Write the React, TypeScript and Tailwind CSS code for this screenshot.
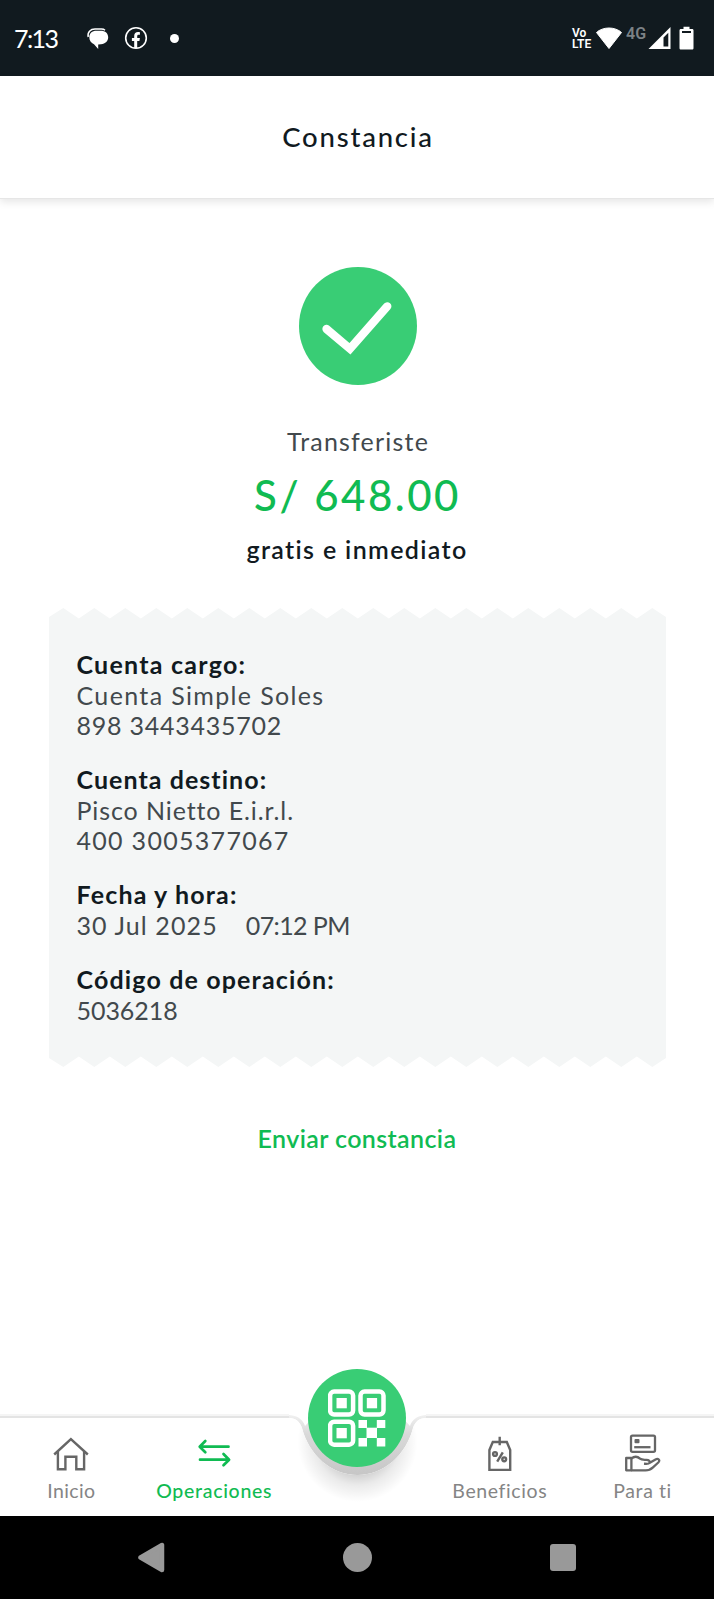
import React from 'react';

type Field = {
    label: string;
    tracking: string;
    lines: { text: string; tracking: string }[][];
};

const fields: Field[] = [
    {
        label: 'Cuenta cargo:',
        tracking: 'tracking-[1.25px]',
        lines: [
            [{ text: 'Cuenta Simple Soles', tracking: 'tracking-[1.35px]' }],
            [{ text: '898 3443435702', tracking: 'tracking-[0.75px]' }],
        ],
    },
    {
        label: 'Cuenta destino:',
        tracking: 'tracking-[1.05px]',
        lines: [
            [{ text: 'Pisco Nietto E.i.r.l.', tracking: 'tracking-[0.9px]' }],
            [{ text: '400 3005377067', tracking: 'tracking-[1.3px]' }],
        ],
    },
    {
        label: 'Fecha y hora:',
        tracking: 'tracking-[1.15px]',
        lines: [
            [
                { text: '30 Jul 2025', tracking: 'tracking-[1.1px]' },
                { text: '07:12 PM', tracking: 'tracking-[-0.6px]' },
            ],
        ],
    },
    {
        label: 'Código de operación:',
        tracking: 'tracking-[1.15px]',
        lines: [[{ text: '5036218', tracking: 'tracking-[-0.05px]' }]],
    },
];

// 19 full teeth plus the clipped ones at both sides
const teeth = Array.from({ length: 20 }, (_, i) => {
    const x = 14.3 + i * 31;
    return i < 19 ? `L${x} 0L${x + 15.5} 10.5` : `L${x} 0`;
}).join('');
const zigzag = `M0 9${teeth}L617 9V11H0Z`;

function StatusBar() {
    return (
        <div className="flex h-[76px] items-center justify-between bg-[#111a1f] text-white">
            <div className="flex items-center pl-[14px]">
                <span className="w-[72px] pt-px text-[25px] tracking-[-1.6px]">7:13</span>
                <svg className="h-6 w-6" viewBox="0 0 24 24" fill="none">
                    <path d="M2.200 11C1.200 6 4.500 3.100 9 3.100H15.500C17 3.100 18.200 3.500 19 4.200" stroke="#fff" strokeWidth="1.500" />
                    <path
                        d="M10.500 4.800H14.500C19.500 4.800 22.200 7.500 22.200 11.300C22.200 15 19.500 17.800 15 18.200L12.200 18.500V23L8 18.200C5 17 3.300 14.500 3.300 11.300C3.300 7.500 6 4.800 10.500 4.800Z"
                        fill="#fff"
                    />
                </svg>
                <svg className="ml-[14px] h-6 w-6" viewBox="0 0 24 24" fill="none">
                    <circle cx="12" cy="12" r="10.300" stroke="#fff" strokeWidth="1.600" />
                    <path
                        d="M10.200 22V15H7.900V12H10.200V10C10.200 7.300 11.700 6 14 6C15 6 15.900 6.200 15.900 6.200V8.700H14.600C13.500 8.700 13.200 9.400 13.200 10.200V12H15.900L15.400 15H13.200V22Z"
                        fill="#fff"
                    />
                </svg>
                <span className="ml-[22px] h-[9px] w-[9px] rounded-full bg-white" />
            </div>
            <div className="flex items-center pr-5">
                <div className="flex w-6 flex-col pt-0.5 font-['Roboto',sans-serif] text-[12px] leading-[11px] font-semibold">
                    <span>Vo</span>
                    <span>LTE</span>
                </div>
                <svg className="h-6 w-[26px]" viewBox="0 0 26 24">
                    <path d="M0.500 6.500C7 0.500 19 0.500 25.500 6.500L13 22.500Z" fill="#fff" stroke="#fff" strokeLinejoin="round" />
                </svg>
                <span className="mb-[9px] w-[26px] pl-1 font-['Roboto',sans-serif] text-[16px] leading-4 font-semibold text-[#7c8286]">
                    4G
                </span>
                <svg className="h-6 w-[23px]" viewBox="0 0 23 24">
                    <path fillRule="evenodd" d="M0.500 23L22.500 1V23ZM15.500 11.500V20.500H20.300V6.700Z" fill="#fff" />
                </svg>
                <svg className="ml-2 h-6 w-[15px]" viewBox="0 0 15 24">
                    <path
                        fillRule="evenodd"
                        d="M4.500 0.800H10.500V3H13C14 3 14.500 3.500 14.500 4.500V22C14.500 23 14 23.500 13 23.500H2C1 23.500 0.500 23 0.500 22V4.500C0.500 3.500 1 3 2 3H4.500ZM3 5V7H12V5Z"
                        fill="#fff"
                    />
                </svg>
            </div>
        </div>
    );
}

function Receipt() {
    return (
        <div className="mt-11 w-[617px]">
            <svg className="block h-[11px] w-full" viewBox="0 0 617 11">
                <path d={zigzag} fill="#f4f6f6" />
            </svg>
            <div className="flex h-[437px] flex-col gap-6 bg-[#f4f6f6] pt-[30px] pl-7 text-[25px] leading-[30px]">
                {fields.map((field) => (
                    <div key={field.label}>
                        <div className={`mb-px font-bold text-[#111a1f] ${field.tracking}`}>{field.label}</div>
                        {field.lines.map((line, i) => (
                            <div key={i} className="flex gap-7 text-[#42494d]">
                                {line.map((part) => (
                                    <span key={part.text} className={part.tracking}>{part.text}</span>
                                ))}
                            </div>
                        ))}
                    </div>
                ))}
            </div>
            <svg className="block h-[11px] w-full rotate-180 -scale-x-100" viewBox="0 0 617 11">
                <path d={zigzag} fill="#f4f6f6" />
            </svg>
        </div>
    );
}

function HomeIcon() {
    return (
        <svg className="h-[38px] w-9" viewBox="0 -2 36 38" fill="none" stroke="#666" strokeWidth="2.400">
            <path d="M1.200 18.500L17.900 3.200L34.800 18.500" />
            <path d="M4.900 15.500V33.200H12.400V20.800H23.300V33.200H31.100V15.500" />
        </svg>
    );
}

function TransferIcon() {
    return (
        <svg className="h-[38px] w-9" viewBox="0 -2 36 38" fill="none" stroke="#10bb52" strokeWidth="2.700" strokeLinecap="round" strokeLinejoin="round">
            <path d="M32.500 10.700H4M9.300 5L3.700 10.700L9.300 16.200" />
            <path d="M4 23.700H32.500M27.500 18L33.100 23.700L27.500 29.300" />
        </svg>
    );
}

function TagIcon() {
    return (
        <svg className="h-[38px] w-9" viewBox="0.500 -2 36 38" fill="none" stroke="#666" strokeWidth="2.400">
            <path d="M11.300 6H25.300L28.700 14V33.900H7.900V14Z" />
            <path d="M18.200 0.700V9.200M21.300 16.300L15.700 25.700" />
            <circle cx="13.500" cy="18" r="1.900" />
            <circle cx="22.700" cy="23.300" r="1.900" />
        </svg>
    );
}

function HandIcon() {
    return (
        <svg className="h-[38px] w-9" viewBox="0.500 0.500 36 38" fill="none" stroke="#666" strokeWidth="2.300" strokeLinejoin="round">
            <rect x="6.500" y="2.100" width="24" height="16.200" rx="1.500" />
            <rect x="10" y="5.400" width="5" height="4.400" rx="1" fill="#666" stroke="none" />
            <path d="M9.700 13.700H26" />
            <path d="M1.700 24.500H6.900V36.800H1.700Z" />
            <path d="M6.700 25.200C9.500 22.800 13 22.800 15.500 25.200C17 26.600 19 26.300 22 26.300C24.500 26.300 25.700 28 24.900 29.500C24.300 30.700 22 30.400 19.500 30.200M24.900 29.500L31 25.900C33.700 24.400 36 26.600 33.800 29L28.500 33.800C26 36.200 24 36.800 21 36.800H6.700" />
        </svg>
    );
}

function QrButton() {
    return (
        <div className="absolute top-[-49px] left-[308px] flex h-[98px] w-[98px] items-center justify-center rounded-full bg-[#39cd75]">
            <svg className="h-[58px] w-[58px]" viewBox="0.500 0 58 58" fill="none">
                <g stroke="#fff" strokeWidth="4.500">
                    <rect x="2.600" y="2.600" width="23" height="23" rx="4" />
                    <rect x="33" y="2.600" width="23" height="23" rx="4" />
                    <rect x="2.600" y="32.700" width="23" height="23" rx="4" />
                </g>
                <g fill="#fff">
                    <rect x="9" y="9" width="10.300" height="10.300" />
                    <rect x="39.300" y="9" width="10.300" height="10.300" />
                    <rect x="9" y="39" width="10.300" height="10.300" />
                    <rect x="31" y="31" width="8.500" height="8" />
                    <rect x="49.300" y="31" width="8.500" height="8" />
                    <rect x="39" y="38.700" width="10.500" height="10.300" />
                    <rect x="31" y="49" width="8.500" height="8.500" />
                    <rect x="49.300" y="49" width="8.500" height="8.500" />
                </g>
            </svg>
        </div>
    );
}

function TabBar() {
    return (
        <nav className="relative h-[98px] text-[19.5px] leading-6 text-[#858585]">
            {/* bar surface with the notch around the QR button */}
            <svg className="absolute top-[-12px] left-0 h-[110px] w-[714px]" viewBox="0 -12 714 110" fill="none">
                <defs>
                    <radialGradient id="glow" cx="357.500" cy="24" r="60" gradientUnits="userSpaceOnUse">
                        <stop offset="0.500" stopColor="#000" stopOpacity="0.200" />
                        <stop offset="0.720" stopColor="#000" stopOpacity="0.080" />
                        <stop offset="1" stopColor="#000" stopOpacity="0" />
                    </radialGradient>
                    <linearGradient id="notch" x1="0" y1="-6" x2="0" y2="57" gradientUnits="userSpaceOnUse">
                        <stop offset="0" stopColor="#f4f4f4" />
                        <stop offset="0.350" stopColor="#d9d9d9" />
                        <stop offset="1" stopColor="#c6c6c6" />
                    </linearGradient>
                    <clipPath id="bar">
                        <path d="M0 0H289C296 0 300 4 302 10C309 37 331 57 357.500 57C384 57 406 37 413 10C415 4 419 0 426 0H714V98H0Z" />
                    </clipPath>
                </defs>
                <path d="M289 -3C299 -2 303 2 305 8L315 -3H400L410 8C412 2 416 -2 426 -3V0C419 0 415 4 413 10C406 37 384 57 357.500 57C331 57 309 37 302 10C300 4 296 0 289 0Z" fill="url(#notch)" />
                <path d="M0 -1H289M714 -1H426" stroke="#e4e4e4" strokeWidth="2" />
                <path d="M0 -3H289M714 -3H426" stroke="#f5f5f5" strokeWidth="2" />
                <g clipPath="url(#bar)">
                    <path d="M0 0H714V98H0Z" fill="#fff" />
                    <circle cx="357.500" cy="24" r="60" fill="url(#glow)" />
                </g>
            </svg>
            <QrButton />
            <div className="relative grid h-full grid-cols-5 pt-4">
                <div className="flex flex-col items-center gap-[7px]">
                    <HomeIcon />
                    <span className="tracking-[0.4px]">Inicio</span>
                </div>
                <div className="flex flex-col items-center gap-[7px] font-medium text-[#10bb52]">
                    <TransferIcon />
                    <span className="tracking-[0.7px]">Operaciones</span>
                </div>
                <div />
                <div className="flex flex-col items-center gap-[7px]">
                    <TagIcon />
                    <span className="tracking-[0.6px]">Beneficios</span>
                </div>
                <div className="flex flex-col items-center gap-[7px]">
                    <HandIcon />
                    <span className="tracking-[0.6px]">Para ti</span>
                </div>
            </div>
        </nav>
    );
}

function SystemNav() {
    return (
        <div className="flex h-[83px] items-center justify-between bg-black pr-[138px] pl-[138px]">
            <svg className="h-[31px] w-[27px]" viewBox="0 0 27 31">
                <path d="M2.500 15.500L24 3V28Z" fill="#999" stroke="#999" strokeWidth="4.500" strokeLinejoin="round" />
            </svg>
            <span className="h-[29px] w-[29px] rounded-full bg-[#999]" />
            <span className="h-[27px] w-[26px] rounded-[3px] bg-[#999]" />
        </div>
    );
}

function App() {
    return (
        <div className="flex h-[1599px] w-[714px] flex-col overflow-hidden bg-white font-['Lato',sans-serif] text-[#111a1f]">
            <StatusBar />
            <header className="flex h-[123px] shrink-0 items-center justify-center border-b border-[#e6e6e6] pl-0.5 shadow-[0_3px_8px_rgba(0,0,0,0.10)]">
                <h1 className="text-[27.5px] leading-8 font-medium tracking-[1.8px]">Constancia</h1>
            </header>

            <main className="flex flex-1 flex-col items-center pt-[68px]">
                <svg className="ml-px h-[118px] w-[118px]" viewBox="0 0 118 118" fill="none">
                    <circle cx="59" cy="59" r="59" fill="#39cd75" />
                    <path d="M27.500 62L51 81.800L88.300 39.300" stroke="#fff" strokeWidth="8.300" strokeLinecap="round" />
                </svg>
                <p className="mt-[41px] pl-0.5 text-[25px] leading-[30px] tracking-[1.2px] text-[#42494d]">Transferiste</p>
                <p className="mt-[14px] pl-px text-[42px] leading-[50px] font-medium tracking-[2.5px] text-[#10bb52]">S/ 648.00</p>
                <p className="mt-[14px] text-[25px] leading-[30px] font-semibold tracking-[1.35px]">gratis e inmediato</p>
                <Receipt />
                <button className="mt-[56px] text-[25px] leading-[30px] font-semibold tracking-[0.4px] text-[#10bb52]">
                    Enviar constancia
                </button>
            </main>

            <TabBar />
            <SystemNav />
        </div>
    );
}

export default App;
